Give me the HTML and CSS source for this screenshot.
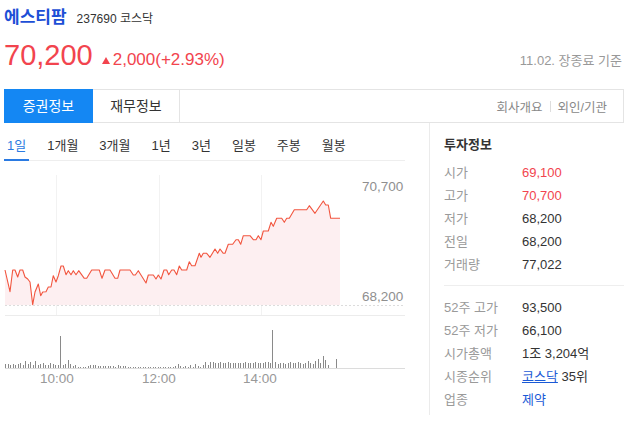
FILE: index.html
```html
<!DOCTYPE html>
<html lang="ko">
<head>
<meta charset="utf-8">
<title>에스티팜</title>
<link rel="stylesheet" href="styles.css">
</head>
<body>
<div class="title-row">
  <h1 class="name">에스티팜</h1>
  <span class="code">237690 코스닥</span>
</div>
<div class="price-row">
  <span class="price">70,200</span>
  <span class="change"><i class="tri"></i>2,000(+2.93%)</span>
  <span class="asof">11.02. 장종료 기준</span>
</div>
<div class="tabs">
  <a class="tab active">증권정보</a>
  <a class="tab">재무정보</a>
  <div class="links"><a>회사개요</a><span class="sep"></span><a>외인/기관</a></div>
</div>
<div class="main">
  <div class="left">
    <ul class="periods">
      <li class="active">1일</li>
      <li>1개월</li>
      <li>3개월</li>
      <li>1년</li>
      <li>3년</li>
      <li>일봉</li>
      <li>주봉</li>
      <li>월봉</li>
    </ul>
    <svg class="chart" width="429" height="240" viewBox="0 162 429 240">
      <path class="grid" d="M56.5 176V316M159.5 176V316M261.5 176V316"/>
      <polygon class="area" points="5,271 10,292.7 12.7,271 15,271 17.7,278 20,271 22.7,271 25,278 27.7,280 30,283 32.7,305.7 35,293 38.3,285 40.7,296.7 42.7,293 46,292.7 48.3,288 51,288 53.3,276.7 56,283 58.3,276.7 61,267 63.3,267 66,275.7 68.3,271.7 71,275.7 73.3,271.7 76,275.7 78.7,271.7 84.3,279.3 86.7,279.3 91.7,271 99.3,271 102,279.3 105,271 110,271 115,279.3 117.7,279.3 120,271 130,271 133.3,276 135.3,276 138.3,271.7 146,284 148.3,276 153.3,276 156,280 158.3,276 161,280 164,271 166.7,271 168.7,275.7 171.7,271 174,271 176.7,275.7 179.3,267 181.7,271 186.7,271 189.3,262.7 191.7,266.7 195,266.7 199.3,254.3 201,258.3 203.3,254.3 206.7,254.3 210,258.3 215,250 217.7,254.3 220,250 223.3,254.3 225,254.3 228.3,245.3 232.7,245.3 236,240.7 238.3,240.7 240.7,245.3 243.3,236.7 250,236.7 253.3,240.7 256,240.7 258.3,236.7 261,240.7 263.3,232 268.3,232 271,223.3 273.3,227.3 276.7,219.3 281.7,219.3 284.3,223.3 286.7,219.3 289.3,219.3 294.3,210.7 306.7,210.7 309.3,206.7 315,214.3 323.3,202 325.7,206 328.3,206 330.7,219.3 340,219.3 340,306 5,306"/>
      <polyline class="line" points="5,271 10,292.7 12.7,271 15,271 17.7,278 20,271 22.7,271 25,278 27.7,280 30,283 32.7,305.7 35,293 38.3,285 40.7,296.7 42.7,293 46,292.7 48.3,288 51,288 53.3,276.7 56,283 58.3,276.7 61,267 63.3,267 66,275.7 68.3,271.7 71,275.7 73.3,271.7 76,275.7 78.7,271.7 84.3,279.3 86.7,279.3 91.7,271 99.3,271 102,279.3 105,271 110,271 115,279.3 117.7,279.3 120,271 130,271 133.3,276 135.3,276 138.3,271.7 146,284 148.3,276 153.3,276 156,280 158.3,276 161,280 164,271 166.7,271 168.7,275.7 171.7,271 174,271 176.7,275.7 179.3,267 181.7,271 186.7,271 189.3,262.7 191.7,266.7 195,266.7 199.3,254.3 201,258.3 203.3,254.3 206.7,254.3 210,258.3 215,250 217.7,254.3 220,250 223.3,254.3 225,254.3 228.3,245.3 232.7,245.3 236,240.7 238.3,240.7 240.7,245.3 243.3,236.7 250,236.7 253.3,240.7 256,240.7 258.3,236.7 261,240.7 263.3,232 268.3,232 271,223.3 273.3,227.3 276.7,219.3 281.7,219.3 284.3,223.3 286.7,219.3 289.3,219.3 294.3,210.7 306.7,210.7 309.3,206.7 315,214.3 323.3,202 325.7,206 328.3,206 330.7,219.3 340,219.3"/>
      <path class="dots" d="M5 306.5H405"/>
      <path class="hline" d="M5 316.5H405"/>
      <text class="axis" x="362" y="192">70,700</text>
      <text class="axis" x="362" y="302">68,200</text>
      <path class="bars" d="M5.5 369v-4M8.5 369v-4M10.5 369v-3M13.5 369v-4M15.5 369v-3M18.5 369v-4M20.5 369v-5M23.5 369v-3M25.5 369v-7M28.5 369v-4M30.5 369v-6M33.5 369v-3M35.5 369v-7M38.5 369v-3M40.5 369v-4M43.5 369v-5M45.5 369v-3M48.5 369v-3M50.5 369v-5M53.5 369v-4M55.5 369v-3M58.5 369v-3M60.5 369v-32M63.5 369v-3M65.5 369v-4M68.5 369v-8M70.5 369v-4M73.5 369v-2M75.5 369v-3M78.5 369v-1M80.5 369v-1M83.5 369v-1M85.5 369v-1M88.5 369v-2M90.5 369v-3M93.5 369v-3M95.5 369v-3M98.5 369v-2M100.5 369v-2M103.5 369v-2M105.5 369v-2M108.5 369v-2M110.5 369v-2M113.5 369v-2M115.5 369v-1M118.5 369v-3M120.5 369v-2M123.5 369v-2M125.5 369v-2M128.5 369v-1M130.5 369v-1M133.5 369v-1M135.5 369v-1M138.5 369v-1M140.5 369v-1M143.5 369v-1M145.5 369v-1M148.5 369v-1M150.5 369v-1M153.5 369v-1M155.5 369v-1M158.5 369v-1M160.5 369v-1M163.5 369v-1M165.5 369v-1M168.5 369v-1M170.5 369v-1M173.5 369v-1M175.5 369v-2M178.5 369v-4M180.5 369v-2M183.5 369v-1M185.5 369v-2M188.5 369v-1M190.5 369v-3M193.5 369v-1M195.5 369v-4M198.5 369v-2M200.5 369v-1M203.5 369v-3M205.5 369v-6M208.5 369v-3M210.5 369v-6M213.5 369v-6M215.5 369v-5M218.5 369v-5M220.5 369v-6M223.5 369v-5M225.5 369v-5M228.5 369v-6M230.5 369v-5M233.5 369v-5M235.5 369v-5M238.5 369v-5M240.5 369v-5M243.5 369v-5M245.5 369v-6M248.5 369v-5M250.5 369v-5M253.5 369v-5M255.5 369v-6M258.5 369v-5M260.5 369v-5M263.5 369v-5M265.5 369v-6M268.5 369v-6M270.5 369v-5M272.5 369v-38M275.5 369v-6M278.5 369v-4M280.5 369v-5M283.5 369v-5M285.5 369v-4M288.5 369v-5M290.5 369v-6M293.5 369v-5M295.5 369v-5M298.5 369v-6M300.5 369v-5M303.5 369v-4M305.5 369v-5M308.5 369v-7M310.5 369v-5M313.5 369v-4M315.5 369v-7M318.5 369v-9M320.5 369v-5M323.5 369v-12M325.5 369v-8M328.5 369v-3M336.5 369v-9"/>
      <path class="vbase" d="M5 369.5H405"/>
      <text class="time" x="57" y="384">10:00</text>
      <text class="time" x="159" y="384">12:00</text>
      <text class="time" x="260" y="384">14:00</text>
    </svg>
  </div>
  <div class="right">
    <h2 class="info-title">투자정보</h2>
    <dl class="info first">
      <dt>시가</dt><dd class="up">69,100</dd>
      <dt>고가</dt><dd class="up">70,700</dd>
      <dt>저가</dt><dd>68,200</dd>
      <dt>전일</dt><dd>68,200</dd>
      <dt>거래량</dt><dd>77,022</dd>
    </dl>
    <dl class="info second">
      <dt>52주 고가</dt><dd>93,500</dd>
      <dt>52주 저가</dt><dd>66,100</dd>
      <dt>시가총액</dt><dd>1조 3,204억</dd>
      <dt>시종순위</dt><dd><a class="link under">코스닥</a> 35위</dd>
      <dt>업종</dt><dd><a class="link">제약</a></dd>
    </dl>
  </div>
</div>
</body>
</html>
```
FILE: styles.css
```css
* { box-sizing: border-box; }
body {
  margin: 0;
  background: #fff;
  color: #333;
  font-family: "Liberation Sans", "Noto Sans CJK KR", sans-serif;
}
a { text-decoration: none; color: inherit; }

.title-row {
  display: flex;
  align-items: baseline;
  padding: 7px 0 0 4px;
  height: 29px;
}
.name {
  margin: 0;
  font-size: 17px;
  line-height: 22px;
  font-weight: bold;
  color: #1d4fd6;
}
.code {
  margin-left: 10px;
  font-size: 12px;
  color: #333;
}

.price-row {
  display: flex;
  align-items: baseline;
  margin-top: 8px;
  padding-left: 4px;
  height: 36px;
  line-height: 36px;
}
.price {
  font-size: 29px;
  color: #f2444e;
}
.change {
  margin-left: 9px;
  font-size: 17px;
  color: #f2444e;
}
.tri {
  display: inline-block;
  width: 0;
  height: 0;
  border-left: 4.5px solid transparent;
  border-right: 4.5px solid transparent;
  border-bottom: 7px solid #f2444e;
  margin-right: 3px;
  vertical-align: 1px;
}
.asof {
  margin-left: auto;
  padding-right: 13px;
  font-size: 13px;
  color: #999;
}

.tabs {
  display: flex;
  align-items: center;
  margin: 16px 11px 0 4px;
  height: 34px;
  border: 1px solid #e4e4e4;
}
.tab {
  width: 87px;
  height: 32px;
  line-height: 32px;
  text-align: center;
  font-size: 14px;
  color: #333;
  border-right: 1px solid #e4e4e4;
}
.tab.active {
  width: 89px;
  height: 34px;
  line-height: 34px;
  margin: -1px 0 -1px -1px;
  background: #1487f3;
  color: #fff;
  border-right: none;
}
.links {
  margin-left: auto;
  padding-right: 16px;
  display: flex;
  align-items: center;
  font-size: 12.5px;
  color: #888;
}
.sep {
  width: 1px;
  height: 11px;
  background: #ddd;
  margin: 0 7px;
}

.main {
  display: flex;
  align-items: flex-start;
}
.left {
  width: 429px;
  flex: none;
}
.periods {
  list-style: none;
  display: flex;
  gap: 15px;
  margin: 9px 24px 0 4px;
  padding: 0;
  border-bottom: 1px solid #eee;
}
.periods li {
  padding: 0 3px;
  line-height: 27px;
  font-size: 13px;
  color: #333;
  border-bottom: 2px solid transparent;
  margin-bottom: -1px;
}
.periods li.active {
  color: #2a7ae2;
  border-bottom-color: #2a7ae2;
}
.chart {
  display: block;
}
.chart .grid { stroke: #f2f2f2; stroke-width: 1; fill: none; }
.chart .area { fill: #fdeff1; stroke: none; }
.chart .line { fill: none; stroke: #f2553f; stroke-width: 1.1; stroke-linejoin: round; }
.chart .dots { stroke: #dcdcdc; stroke-dasharray: 2 2; stroke-width: 1; }
.chart .hline { stroke: #ececec; stroke-width: 1; }
.chart .vbase { stroke: #dcdcdc; stroke-width: 1; }
.chart .bars { stroke: #8a8a8a; stroke-width: 1; fill: none; }
.chart text {
  font-family: "Liberation Sans", sans-serif;
  font-size: 13.5px;
  fill: #8f8f8f;
}
.chart .time { text-anchor: middle; fill: #999; }

.right {
  flex: 1;
  border-left: 1px solid #ebebeb;
  padding: 11px 11px 4px 14px;
}
.info-title {
  margin: 0 0 5px;
  font-size: 13px;
  line-height: 22px;
  font-weight: bold;
  color: #333;
}
.info {
  display: grid;
  grid-template-columns: 78px 1fr;
  margin: 0;
  font-size: 13px;
  line-height: 23px;
}
.info dt { color: #9a9a9a; }
.info dd { margin: 0; color: #333; }
.info dd.up { color: #f2444e; }
.info.first {
  padding-bottom: 9px;
  border-bottom: 1px solid #eee;
}
.info.second { padding-top: 10px; }
.link { color: #1a5ad6; }
.link.under { text-decoration: underline; }
```
